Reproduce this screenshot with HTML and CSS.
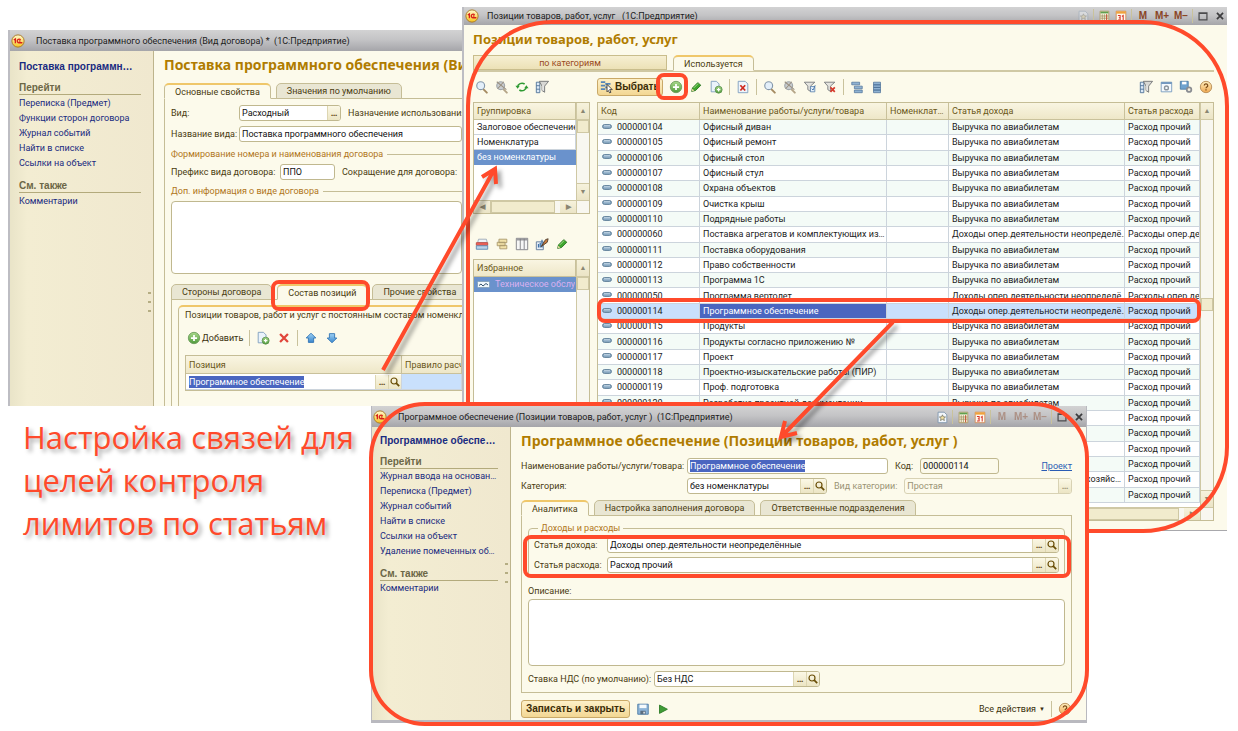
FILE: index.html
```html
<!DOCTYPE html>
<html lang="ru">
<head>
<meta charset="utf-8">
<title>Настройка связей для целей контроля лимитов по статьям</title>
<link rel="stylesheet" href="styles.css">
</head>
<body>
<svg class="sprite" aria-hidden="true">
  <defs>
    <linearGradient id="gy" x1="0" y1="0" x2="0" y2="1"><stop offset="0" stop-color="#fffbd0"/><stop offset="1" stop-color="#f7c31e"/></linearGradient>
    <linearGradient id="gg" x1="0" y1="0" x2="0" y2="1"><stop offset="0" stop-color="#a9d98c"/><stop offset="1" stop-color="#4f9a3a"/></linearGradient>
    <linearGradient id="gb" x1="0" y1="0" x2="0" y2="1"><stop offset="0" stop-color="#9fd2f5"/><stop offset="1" stop-color="#3a86cc"/></linearGradient>
    <linearGradient id="go" x1="0" y1="0" x2="0" y2="1"><stop offset="0" stop-color="#fff0c0"/><stop offset="1" stop-color="#f0a850"/></linearGradient>
  </defs>
  <symbol id="logo" viewBox="0 0 16 16"><circle cx="8" cy="8" r="7" fill="url(#gy)" stroke="#a8741c"/><path d="M3.2 6.8 5 5.6V10.600M11 6.700A2.100 2.100 0 1 0 9.300 10H13M10.800 8H9.300" fill="none" stroke="#d8201a" stroke-width="1.500"/></symbol>
  <symbol id="search" viewBox="0 0 16 16"><path d="m9.500 10.500 4 4" stroke="#a58b62" stroke-width="2.200" stroke-linecap="round"/><circle cx="6.500" cy="6.500" r="4.500" fill="#e3effa" stroke="#8497aa" stroke-width="1.300"/></symbol>
  <symbol id="searchoff" viewBox="0 0 16 16"><path d="m9.500 10.500 4 4" stroke="#b5a588" stroke-width="2.200" stroke-linecap="round"/><circle cx="6.500" cy="6.500" r="4.500" fill="#c9cdd0" stroke="#a0a6aa" stroke-width="1.300"/><path d="m2 2 11 9M10 2 3 10" stroke="#9a9080" stroke-width="1.200"/></symbol>
  <symbol id="lens" viewBox="0 0 12 12"><circle cx="5" cy="5" r="3" fill="none" stroke="#6a4f08" stroke-width="1.200"/><path d="m7.200 7.200 3 3" stroke="#6a4f08" stroke-width="1.800"/></symbol>
  <symbol id="refresh" viewBox="0 0 16 16"><path d="M3 8a5 4.500 0 0 1 8-3.400M13 8a5 4.500 0 0 1-8 3.400" fill="none" stroke="#2f9a33" stroke-width="1.800"/><path d="M0.500 6.500h5L3 10zM10.500 9.500h5L13 6z" fill="#2f9a33"/></symbol>
  <symbol id="filterlist" viewBox="0 0 16 16"><path d="M1.500 2.500h4v12h-4z" fill="#dbe9f7" stroke="#4b6f96"/><path d="M1.500 6.500h4M1.500 10.500h4" stroke="#4b6f96"/><path d="M5 1.500h10.500L11 7v7l-3-2V7z" fill="#d8d8d4" stroke="#6e7072"/><path d="M9 6v6" stroke="#fff"/></symbol>
  <symbol id="plus" viewBox="0 0 16 16"><circle cx="8" cy="8" r="6.500" fill="url(#gg)" stroke="#6d9c5c"/><path d="M8 4.500v7M4.500 8h7" stroke="#fff" stroke-width="2"/></symbol>
  <symbol id="pencil" viewBox="0 0 16 16"><path d="m3 13 1-4 6-6 3.500 3-6 6z" fill="#3fa62e" stroke="#23701b"/><path d="m3 13 .7-3 2.400 2z" fill="#e9d6a0"/><path d="m5.500 9 5-5" stroke="#a8e08f"/></symbol>
  <symbol id="docplus" viewBox="0 0 16 16"><path d="M2.500 1.500h6l3 3v9h-9z" fill="#eaf3fb" stroke="#7b9cbd"/><circle cx="11" cy="11" r="4" fill="url(#gg)" stroke="#5d9450"/><path d="M11 9v4M9 11h4" stroke="#fff" stroke-width="1.400"/></symbol>
  <symbol id="cross" viewBox="0 0 16 16"><path d="m3.500 3.500 9 9m0-9-9 9" stroke="#e0453a" stroke-width="2.600"/></symbol>
  <symbol id="docx" viewBox="0 0 16 16"><path d="M2.500 1.500h8l3 3v10h-11z" fill="#eff6fc" stroke="#7b9cbd"/><path d="m5 6 5.500 6m0-6L5 12" stroke="#cf2a20" stroke-width="2"/></symbol>
  <symbol id="funnelok" viewBox="0 0 16 16"><path d="M1.500 2.500h12L8.500 7v6l-3-2V7z" fill="#e4e4df" stroke="#73777a"/><path d="M8.500 7.500h5v6h-5z" fill="#eaf3fb" stroke="#5f86b0"/><path d="m10 10 1.500 1.500L14 6" fill="none" stroke="#3a6ea8"/></symbol>
  <symbol id="funnelx" viewBox="0 0 16 16"><path d="M1.500 2.500h12L8.500 7v6l-3-2V7z" fill="#e4e4df" stroke="#73777a"/><path d="m8.500 8.500 5 5m0-5-5 5" stroke="#d63a2c" stroke-width="2"/></symbol>
  <symbol id="tree" viewBox="0 0 16 16"><path d="M2 2.500h9v3H2zM5 7h9v3H5zM5 11.500h9v3H5z" fill="#8fb2d2" stroke="#4b6f96" stroke-width=".8"/></symbol>
  <symbol id="list" viewBox="0 0 16 16"><path d="M4 2.500h8v3H4zM4 5.500h8v3H4zM4 8.500h8v3H4zM4 11.500h8v3H4z" fill="#8fb2d2" stroke="#4b6f96" stroke-width=".8"/></symbol>
  <symbol id="wingear" viewBox="0 0 16 16"><path d="M2.500 2.500h12v11h-12z" fill="#f4f9fd" stroke="#7498bd"/><path d="M2.500 3.500h12" stroke="#6a92bb" stroke-width="2"/><circle cx="8.500" cy="9" r="2.200" fill="none" stroke="#8a949c" stroke-width="1.600"/></symbol>
  <symbol id="savegear" viewBox="0 0 16 16"><path d="M1.500 1.500h9v9h-9z" fill="#6fa3cf" stroke="#4c7aa5"/><path d="M3.500 2h5v3h-5z" fill="#fff"/><circle cx="11.500" cy="11" r="2.600" fill="#f4f0e0" stroke="#8a8d92" stroke-width="2"/></symbol>
  <symbol id="help" viewBox="0 0 16 16"><circle cx="8" cy="8" r="6.500" fill="url(#go)" stroke="#b58a52"/><path d="M6 6.300a2 2 0 1 1 2.700 1.900q-.7.400-.7 1.300M8 10.700v1.400" fill="none" stroke="#7a4a16" stroke-width="1.400"/></symbol>
  <symbol id="star" viewBox="0 0 16 16"><path d="M3.500 2.500h7l3 3v9h-10z" fill="#f2f6fa" stroke="#7d95ad"/><path d="m8.500 5.500 1 2.300 2.500.2-1.900 1.600.6 2.400-2.200-1.300L6.300 12l.6-2.400L5 8l2.500-.2z" fill="#f5e3a4" stroke="#6a6a5a" stroke-width=".8"/></symbol>
  <symbol id="calc" viewBox="0 0 16 16"><path d="M3.500 2.500h10v12h-10z" fill="#f7f1dc" stroke="#b29a62"/><path d="M4 3h9v2H4z" fill="#5fa04e"/><path d="M6 6v8M8.500 6v8M11 6v8M4 8h9M4 10.500h9" stroke="#9b8b58" stroke-width=".8"/><path d="M11 6v8" stroke="#c9482f"/></symbol>
  <symbol id="cal" viewBox="0 0 16 16"><path d="M2.500 2.500h11v12h-11z" fill="#fffaf0" stroke="#d08a55"/><path d="M2.500 4h11" stroke="#f0a23c" stroke-width="2.600"/><path d="M4.500 7.500h2.500v2.500H5.500H7v2.500H4.500M9 8.500l1.500-1v5.500" fill="none" stroke="#d8382a" stroke-width="1.200"/></symbol>
  <symbol id="max" viewBox="0 0 16 16"><path d="M3.500 4.500h9v8h-9zM3 5h10" fill="none" stroke="#4b4b4d" stroke-width="1.400"/></symbol>
  <symbol id="close" viewBox="0 0 16 16"><path d="m4.500 4.500 7 7m0-7-7 7" stroke="#3c3c3e" stroke-width="2"/></symbol>
  <symbol id="cards" viewBox="0 0 16 16"><path d="M4 2.500h9l1 4H3z" fill="#eef3f8" stroke="#9aa8b6"/><path d="M1.500 6.500h13v3h-13z" fill="#f0645a" stroke="#b94a44"/><path d="M1.500 10h13v4h-13z" fill="#b9d3ea" stroke="#5a86b0"/></symbol>
  <symbol id="folders" viewBox="0 0 16 16"><path d="M4.500 2.500h9v4h-9zM2.500 6h9v4h-9zM5.500 9.500h8v4h-8z" fill="#f1e1a8" stroke="#a8976a"/></symbol>
  <symbol id="cols" viewBox="0 0 16 16"><path d="M1.500 1.500h13v13h-13z" fill="#f6f6f6" stroke="#7c7c80"/><path d="M1.500 3h13" stroke="#9a9a9e" stroke-width="2"/><path d="M6 2v12M10.500 2v12" stroke="#7c7c80"/></symbol>
  <symbol id="report" viewBox="0 0 16 16"><path d="M1.500 5.500h8v9h-8z" fill="#e6eef7" stroke="#5b7796"/><path d="M4 12V8M6 12V6.500M8 12V3" stroke="#3c70a8" stroke-width="1.400"/><path d="m7 11 5-8 3-1-1 4z" fill="#c97a3d" stroke="#4b3a2a"/></symbol>
  <symbol id="up" viewBox="0 0 16 16"><path d="m8 2.500 5.500 5.500H11v5H5V8H2.500z" fill="url(#gb)" stroke="#2f72b4"/></symbol>
  <symbol id="down" viewBox="0 0 16 16"><path d="M8 13.500 13.500 8H11V3H5v5H2.500z" fill="url(#gb)" stroke="#2f72b4"/></symbol>
  <symbol id="save" viewBox="0 0 16 16"><path d="M2 2.500h12v11.500H2z" fill="#8db4d8" stroke="#4c7aa5"/><path d="M4 3h8v4H4z" fill="#f5fafd"/><path d="M5 10h6v4H5z" fill="#5b6e80"/><path d="M8.500 11h1.500v2H8.500z" fill="#fff"/></symbol>
  <symbol id="play" viewBox="0 0 16 16"><path d="M4 3.500v9.500l9-4.700z" fill="#3f9c36" stroke="#2b7a26"/></symbol>
  <symbol id="pick" viewBox="0 0 16 16"><path d="M1 2.500h5M1 6.500h5M1 10.500h5M6 4.500h6M6 8.500h3" stroke="#5586b8" stroke-width="2"/><path d="m8 5 6 6h-3l1.500 3-1.500.7L9.500 12 8 13.500z" fill="#fff" stroke="#333"/></symbol>
  <symbol id="dash" viewBox="0 0 10 6"><rect x=".5" y=".5" width="9" height="4" rx="2" fill="#86a6c0" stroke="#557792" stroke-width=".8"/><path d="M2 1.800h6" stroke="#c9dce9"/></symbol>
  <symbol id="wave" viewBox="0 0 14 8"><rect x=".5" y=".5" width="12" height="6" rx="1" fill="#f2f7fb" stroke="#88a4bd"/><path d="m2 4.500 2-1.500 2 2 3-2.500L11 4" fill="none" stroke="#35536e"/></symbol>
</svg>

<main class="canvas">

  <section class="window w-contract">
    <header class="titlebar"><svg class="ic"><use href="#logo"/></svg><span>Поставка программного обеспечения (Вид договора) *&nbsp; (1С:Предприятие)</span></header>
    <div class="body">
      <nav class="side">
        <strong>Поставка программн…</strong>
        <h3>Перейти</h3>
        <a href="#">Переписка (Предмет)</a><a href="#">Функции сторон договора</a><a href="#">Журнал событий</a><a href="#">Найти в списке</a><a href="#">Ссылки на объект</a>
        <h3>См. также</h3>
        <a href="#">Комментарии</a>
        <i class="grip"></i>
      </nav>
      <div class="work">
        <h1>Поставка программного обеспечения (Вид договора)</h1>
        <div class="tabs"><button class="tab on">Основные свойства</button><button class="tab">Значения по умолчанию</button></div>
        <div class="panel">
          <div class="row"><label class="l68" for="kind">Вид:</label><span class="field f102"><input id="kind" value="Расходный"><button>…</button></span><label>Назначение использования:</label></div>
          <div class="row"><label class="l68" for="kname">Название вида:</label><span class="field grow"><input id="kname" value="Поставка программного обеспечения"></span></div>
          <div class="legend"><span>Формирование номера и наименования договора</span></div>
          <div class="row tight"><label class="l109" for="prefix">Префикс вида договора:</label><span class="field f55"><input id="prefix" value="ППО"></span><label>Сокращение для договора:</label></div>
          <div class="legend"><span>Доп. информация о виде договора</span></div>
          <textarea class="info" aria-label="Доп. информация"></textarea>
          <div class="tabs second"><button class="tab">Стороны договора</button><button class="tab on">Состав позиций</button><button class="tab">Прочие свойства</button></div>
          <div class="panel inner">
            <div class="nested">
              <p>Позиции товаров, работ и услуг с постоянным составом номенклатуры</p>
              <div class="tools"><button class="txt"><svg class="ic"><use href="#plus"/></svg>Добавить</button><i class="sep"></i><button><svg class="ic"><use href="#docplus"/></svg></button><button><svg class="ic"><use href="#cross"/></svg></button><i class="sep"></i><button><svg class="ic"><use href="#up"/></svg></button><button><svg class="ic"><use href="#down"/></svg></button></div>
              <table class="grid pos">
                <colgroup><col class="c216"><col></colgroup>
                <thead><tr><th>Позиция</th><th>Правило расчета</th></tr></thead>
                <tbody><tr><td><span class="cellfield"><input class="sel" aria-label="Позиция" value="Программное обеспечение"><button>…</button><button><svg class="lens"><use href="#lens"/></svg></button></span></td><td class="cur"></td></tr></tbody>
              </table>
            </div>
          </div>
        </div>
      </div>
    </div>
  </section>

  <section class="window w-items">
    <header class="titlebar"><svg class="ic"><use href="#logo"/></svg><span>Позиции товаров, работ, услуг &nbsp; (1С:Предприятие)</span>
      <div class="sys"><button class="dim"><svg class="ic"><use href="#star"/></svg></button><i class="sep"></i><button><svg class="ic"><use href="#calc"/></svg></button><button><svg class="ic"><use href="#cal"/></svg></button><i class="sep"></i><button class="m">M</button><button class="m">M+</button><button class="m">M−</button><i class="sep"></i><button><svg class="ic"><use href="#max"/></svg></button><button><svg class="ic"><use href="#close"/></svg></button></div>
    </header>
    <div class="items">
      <h1>Позиции товаров, работ, услуг</h1>
      <div class="switch"><button class="cat">по категориям</button><div class="tabs"><button class="tab on">Используется</button></div></div>
      <div class="split">
        <div class="left">
          <div class="tools"><button><svg class="ic"><use href="#search"/></svg></button><button><svg class="ic"><use href="#searchoff"/></svg></button><button><svg class="ic"><use href="#refresh"/></svg></button><button><svg class="ic"><use href="#filterlist"/></svg></button></div>
          <div class="listbox groups">
            <div class="view">
              <table class="grid"><thead><tr><th>Группировка</th></tr></thead><tbody><tr><td>Залоговое обеспечение</td></tr><tr><td>Номенклатура</td></tr><tr class="pick"><td>без номенклатуры</td></tr></tbody></table>
              <div class="vbar"><b>▲</b><i class="thumb"></i><b class="end">▼</b></div>
            </div>
            <div class="hbar"><b>◀</b><i class="thumb"></i><b>▶</b><span></span></div>
          </div>
          <div class="tools lower"><button><svg class="ic"><use href="#cards"/></svg></button><button><svg class="ic"><use href="#folders"/></svg></button><button><svg class="ic"><use href="#cols"/></svg></button><button><svg class="ic"><use href="#report"/></svg></button><button><svg class="ic"><use href="#pencil"/></svg></button></div>
          <div class="listbox favs">
            <div class="view">
              <table class="grid"><thead><tr><th>Избранное</th></tr></thead><tbody><tr class="pick fav"><td><svg class="wave"><use href="#wave"/></svg>Техническое обслуживание</td></tr></tbody></table>
              <div class="vbar"><b>▲</b><i class="thumb"></i></div>
            </div>
          </div>
        </div>
        <div class="right">
          <div class="tools"><button class="gold"><svg class="ic"><use href="#pick"/></svg>Выбрать</button><button><svg class="ic"><use href="#plus"/></svg></button><button><svg class="ic"><use href="#pencil"/></svg></button><button><svg class="ic"><use href="#docplus"/></svg></button><i class="sep"></i><button><svg class="ic"><use href="#docx"/></svg></button><i class="sep"></i><button><svg class="ic"><use href="#search"/></svg></button><button><svg class="ic"><use href="#searchoff"/></svg></button><button><svg class="ic"><use href="#funnelok"/></svg></button><button><svg class="ic"><use href="#funnelx"/></svg></button><i class="sep"></i><button><svg class="ic"><use href="#tree"/></svg></button><button><svg class="ic"><use href="#list"/></svg></button>
            <span class="push"></span><button><svg class="ic"><use href="#filterlist"/></svg></button><button><svg class="ic"><use href="#wingear"/></svg></button><button><svg class="ic"><use href="#savegear"/></svg></button><button><svg class="ic"><use href="#help"/></svg></button></div>
          <div class="listbox main">
            <div class="view">
              <div class="rows">
              <table class="grid zebra">
                <colgroup><col class="c102"><col class="c187"><col class="c62"><col><col class="c75"></colgroup>
                <thead><tr><th>Код</th><th>Наименование работы/услуги/товара</th><th>Номенклат…</th><th>Статья дохода</th><th>Статья расхода</th></tr></thead>
                <tbody>
                <tr><td><svg class="dash"><use href="#dash"/></svg>000000104</td><td>Офисный диван</td><td></td><td>Выручка по авиабилетам</td><td>Расход прочий</td></tr>
                <tr><td><svg class="dash"><use href="#dash"/></svg>000000105</td><td>Офисный ремонт</td><td></td><td>Выручка по авиабилетам</td><td>Расход прочий</td></tr>
                <tr><td><svg class="dash"><use href="#dash"/></svg>000000106</td><td>Офисный стол</td><td></td><td>Выручка по авиабилетам</td><td>Расход прочий</td></tr>
                <tr><td><svg class="dash"><use href="#dash"/></svg>000000107</td><td>Офисный стул</td><td></td><td>Выручка по авиабилетам</td><td>Расход прочий</td></tr>
                <tr><td><svg class="dash"><use href="#dash"/></svg>000000108</td><td>Охрана объектов</td><td></td><td>Выручка по авиабилетам</td><td>Расход прочий</td></tr>
                <tr><td><svg class="dash"><use href="#dash"/></svg>000000109</td><td>Очистка крыш</td><td></td><td>Выручка по авиабилетам</td><td>Расход прочий</td></tr>
                <tr><td><svg class="dash"><use href="#dash"/></svg>000000110</td><td>Подрядные работы</td><td></td><td>Выручка по авиабилетам</td><td>Расход прочий</td></tr>
                <tr><td><svg class="dash"><use href="#dash"/></svg>000000060</td><td>Поставка агрегатов и комплектующих из…</td><td></td><td>Доходы опер.деятельности неопределё…</td><td>Расходы опер.деятельности</td></tr>
                <tr><td><svg class="dash"><use href="#dash"/></svg>000000111</td><td>Поставка оборудования</td><td></td><td>Выручка по авиабилетам</td><td>Расход прочий</td></tr>
                <tr><td><svg class="dash"><use href="#dash"/></svg>000000112</td><td>Право собственности</td><td></td><td>Выручка по авиабилетам</td><td>Расход прочий</td></tr>
                <tr><td><svg class="dash"><use href="#dash"/></svg>000000113</td><td>Программа 1С</td><td></td><td>Выручка по авиабилетам</td><td>Расход прочий</td></tr>
                <tr><td><svg class="dash"><use href="#dash"/></svg>000000050</td><td>Программа вертолет</td><td></td><td>Доходы опер.деятельности неопределё…</td><td>Расходы опер.деятельности</td></tr>
                <tr class="cur"><td><svg class="dash"><use href="#dash"/></svg>000000114</td><td class="focus">Программное обеспечение</td><td></td><td>Доходы опер.деятельности неопределё…</td><td>Расход прочий</td></tr>
                <tr><td><svg class="dash"><use href="#dash"/></svg>000000115</td><td>Продукты</td><td></td><td>Выручка по авиабилетам</td><td>Расход прочий</td></tr>
                <tr><td><svg class="dash"><use href="#dash"/></svg>000000116</td><td>Продукты согласно приложению №</td><td></td><td>Выручка по авиабилетам</td><td>Расход прочий</td></tr>
                <tr><td><svg class="dash"><use href="#dash"/></svg>000000117</td><td>Проект</td><td></td><td>Выручка по авиабилетам</td><td>Расход прочий</td></tr>
                <tr><td><svg class="dash"><use href="#dash"/></svg>000000118</td><td>Проектно-изыскательские работы (ПИР)</td><td></td><td>Выручка по авиабилетам</td><td>Расход прочий</td></tr>
                <tr><td><svg class="dash"><use href="#dash"/></svg>000000119</td><td>Проф. подготовка</td><td></td><td>Выручка по авиабилетам</td><td>Расход прочий</td></tr>
                <tr><td><svg class="dash"><use href="#dash"/></svg>000000120</td><td>Разработка проектной документации</td><td></td><td>Выручка по авиабилетам</td><td>Расход прочий</td></tr>
                <tr><td></td><td></td><td></td><td></td><td>Расход прочий</td></tr>
                <tr><td></td><td></td><td></td><td></td><td>Расход прочий</td></tr>
                <tr><td></td><td></td><td></td><td></td><td>Расход прочий</td></tr>
                <tr><td></td><td></td><td></td><td></td><td>Расход прочий</td></tr>
                <tr><td></td><td></td><td></td><td class="tail">хозяйс…</td><td>Расход прочий</td></tr>
                <tr><td></td><td></td><td></td><td></td><td>Расход прочий</td></tr>
                </tbody>
              </table>
              </div>
              <div class="vbar"><b>▲</b><i class="thumb"></i><b class="end">▼</b></div>
            </div>
            <div class="hbar"><b>◀</b><i class="thumb"></i><b>▶</b><span></span></div>
          </div>
        </div>
      </div>
    </div>
  </section>

  <div class="mark m-items"></div>

  <section class="window w-card">
    <header class="titlebar"><svg class="ic"><use href="#logo"/></svg><span>Программное обеспечение (Позиции товаров, работ, услуг )&nbsp; (1С:Предприятие)</span>
      <div class="sys"><button><svg class="ic"><use href="#star"/></svg></button><i class="sep"></i><button><svg class="ic"><use href="#calc"/></svg></button><button><svg class="ic"><use href="#cal"/></svg></button><i class="sep"></i><button class="m dim">M</button><button class="m dim">M+</button><button class="m dim">M−</button><i class="sep"></i><button><svg class="ic"><use href="#max"/></svg></button><button><svg class="ic"><use href="#close"/></svg></button></div>
    </header>
    <div class="body">
      <nav class="side">
        <strong>Программное обеспе…</strong>
        <h3>Перейти</h3>
        <a href="#">Журнал ввода на основан…</a><a href="#">Переписка (Предмет)</a><a href="#">Журнал событий</a><a href="#">Найти в списке</a><a href="#">Ссылки на объект</a><a href="#">Удаление помеченных об…</a>
        <h3>См. также</h3>
        <a href="#">Комментарии</a>
        <i class="grip"></i>
      </nav>
      <div class="work">
        <h1>Программное обеспечение (Позиции товаров, работ, услуг )</h1>
        <div class="row"><label class="l166" for="iname">Наименование работы/услуги/товара:</label><span class="field f200"><input id="iname" class="sel" value="Программное обеспечение"></span><label for="code">Код:</label><span class="field ro f79"><input id="code" value="000000114"></span><a class="link" href="#">Проект</a></div>
        <div class="row"><label class="l166" for="cat">Категория:</label><span class="field f140"><input id="cat" value="без номенклатуры"><button>…</button><button><svg class="lens"><use href="#lens"/></svg></button></span><label class="off" for="ctype">Вид категории:</label><span class="field ro off grow"><input id="ctype" value="Простая" disabled><button disabled>…</button></span></div>
        <div class="tabs"><button class="tab on">Аналитика</button><button class="tab">Настройка заполнения договора</button><button class="tab">Ответственные подразделения</button></div>
        <div class="panel">
          <fieldset><legend>Доходы и расходы</legend>
            <div class="row"><label class="l73" for="inc">Статья дохода:</label><span class="field grow"><input id="inc" value="Доходы опер.деятельности неопределённые"><button>…</button><button><svg class="lens"><use href="#lens"/></svg></button></span></div>
            <div class="row"><label class="l73" for="exp">Статья расхода:</label><span class="field grow"><input id="exp" value="Расход прочий"><button>…</button><button><svg class="lens"><use href="#lens"/></svg></button></span></div>
          </fieldset>
          <label class="desc" for="desc">Описание:</label>
          <textarea id="desc"></textarea>
          <div class="row"><label class="l126" for="vat">Ставка НДС (по умолчанию):</label><span class="field f166"><input id="vat" value="Без НДС"><button>…</button><button><svg class="lens"><use href="#lens"/></svg></button></span></div>
        </div>
        <div class="tools foot"><button class="gold">Записать и закрыть</button><button><svg class="ic"><use href="#save"/></svg></button><button><svg class="ic"><use href="#play"/></svg></button><span class="push"></span><button class="txt">Все действия <small>▼</small></button><i class="sep"></i><button><svg class="ic"><use href="#help"/></svg></button></div>
      </div>
    </div>
  </section>

  <p class="caption">Настройка связей для целей контроля лимитов по статьям</p>

  <div class="mark m-card"></div>
  <div class="mark small m-tab"></div>
  <div class="mark small m-plus"></div>
  <div class="mark small m-row"></div>
  <div class="mark small m-fields"></div>
  <svg class="arrows" viewBox="0 0 1238 731" aria-hidden="true">
    <g fill="none" stroke="#ff4a2b" stroke-width="4"><path d="M383 370 494 170M482 177l13-8 1 15"/><path d="M893 322 782 436M785 421l-4 16 16-4"/></g>
  </svg>
</main>
</body>
</html>
```
FILE: styles.css
```css
* { box-sizing: border-box; }
body { margin: 0; background: #fff; font: 9px/12px Roboto, "Liberation Sans", Arial, sans-serif; color: #333; }
button, input, textarea { font: inherit; color: inherit; margin: 0; }
button { border: 0; padding: 0; background: none; white-space: nowrap; }
h1, h3, p { margin: 0; }
a { text-decoration: none; }
label { flex: none; }
.sprite { position: absolute; width: 0; height: 0; }
.ic { width: 14px; height: 14px; display: block; flex: none; }
.lens { width: 12px; height: 12px; display: block; }
.canvas { position: relative; min-height: 731px; overflow: hidden; }

/* windows */
.window { position: absolute; display: flex; flex-direction: column; overflow: hidden; background: #fcfaeb; white-space: nowrap; }
.w-contract { left: 8px; top: 30px; width: 455px; height: 376px; border-left: 2px solid #bdbdc3; border-right: 1px solid #b4b4ba; }
.w-items { left: 462px; top: 7px; width: 765px; height: 524px; border-left: 2px solid #bdbdc3; border-bottom: 1px solid #a8a8ac; }
.w-card { left: 371px; top: 406px; width: 716px; height: 317px; border: solid #b9b9bf; border-width: 0 1px 3px; }
.titlebar { flex: none; height: 21px; display: flex; align-items: center; gap: 11px; padding-left: 1px; background: linear-gradient(#d2d2d3, #c4c4c6 45%, #a5a5a9); color: #1c1c1c; }
.w-items .titlebar { height: 18px; gap: 8px; }
.titlebar .sys { margin-left: auto; display: flex; align-items: center; gap: 3px; font: bold 10px/12px "Liberation Sans", Arial, sans-serif; color: #8a4424; }
.sys .sep { height: 14px; }
.sys .m { width: 16px; display: flex; justify-content: center; }
.dim { opacity: .4; }
.sep { width: 1px; height: 16px; background: #c9c29c; flex: none; }
.body { flex: 1; display: flex; min-height: 0; }
.side { position: relative; flex: none; width: 144px; padding: 8px 12px 0 9px; background: linear-gradient(90deg, #e9e4c8, #f3edd2 12%, #f0e8cf); border-right: 1px solid #bdb48c; color: #182a80; }
.w-card .side { width: 139px; padding-top: 6px; padding-left: 8px; }
.side strong, .side a { display: block; height: 15px; line-height: 15px; color: #182a80; }
.side strong, .side h3 { font-family: "Liberation Sans", Arial, sans-serif; font-size: 10px; font-weight: bold; }
.side strong { height: 16px; line-height: 16px; }
.side h3 { height: 14px; margin: 8px 0 1px; border-bottom: 1px solid #b3aa7c; line-height: 13px; color: #6c6746; }
.side strong + h3 { margin-top: 6px; }
.w-card .side h3 { margin-bottom: 0; }
.grip { position: absolute; right: 2px; top: 241px; width: 3px; height: 22px; background: repeating-linear-gradient(#b5ad83 0 2px, transparent 2px 9px); }
.w-card .grip { top: 136px; }
.work { flex: 1; min-width: 0; padding: 0 0 0 10px; }
.w-card .work { padding-right: 14px; }
h1 { height: 28px; line-height: 28px; font-family: "Noto Sans", sans-serif; font-size: 14px; font-weight: bold; color: #b07c00; }

/* tabs */
.tabs { display: flex; gap: 5px; height: 16px; position: relative; margin-bottom: -1px; }
.w-contract .work > .tabs { margin-top: 4px; }
.tab { padding: 0 10px; border: 1px solid #c5bd96; border-radius: 5px 5px 0 0; background: #e9e6d3; color: #4a3c10; }
.tab.on { background: #fcfaeb; border-top: 2px solid #efc76a; border-bottom-color: #fcfaeb; }
.panel { border: 1px solid #c5bd96; padding: 6px; }
.w-contract .panel { border-right: 0; padding-right: 0; }

/* form rows */
.row { display: flex; align-items: center; gap: 7px; height: 16px; margin-bottom: 5px; color: #4a3c10; }
.row.tight { margin-bottom: 4px; }
.field { display: flex; height: 16px; background: #fff; border: 1px solid #c0b88f; border-radius: 3px; overflow: hidden; padding-left: 2px; flex: none; align-items: center; }
.field.grow { flex: 1; }
.field input, .cellfield input { flex: 1; min-width: 0; border: 0; padding: 0; background: none; height: 12px; color: #111; outline: 0; }
.field button, .cellfield button { width: 13px; height: 14px; background: linear-gradient(#fbf8e6, #ece5c4); border-left: 1px solid #ddd6b2; color: #5a4306; font-weight: bold; display: flex; justify-content: center; align-items: center; flex: none; }
input.sel { flex: none !important; field-sizing: content; background: #4a66c0 !important; color: #fff !important; }
.field.ro { background: #fcfaeb; }
.field.off, .field.off input, .field.off button, label.off { color: #9a9374; border-color: #d8d2b4; }
.l68 { width: 68px; margin-right: -7px; }
.l109 { width: 109px; margin-right: -7px; }
.l166 { width: 166px; margin-right: -7px; }
.l73 { width: 73px; margin-right: -7px; }
.l126 { width: 126px; margin-right: -7px; }
.f102 { width: 102px; } .f55 { width: 55px; } .f200 { width: 201px; } .f79 { width: 79px; } .f140 { width: 140px; } .f166 { width: 166px; }
.legend { display: flex; align-items: center; gap: 4px; height: 14px; margin-bottom: 3px; color: #b0761a; }
.legend::after { content: ""; flex: 1; height: 1px; background: #c5bd96; }
textarea { display: block; width: 100%; border: 1px solid #c0b88f; border-radius: 4px; background: #fff; resize: none; outline: 0; }
.info { height: 73px; margin-bottom: 10px; }
.panel.inner { padding: 5px 0 0 6px; }
.nested { border: 1px solid #c5bd96; border-right: 0; border-bottom: 0; border-top: 2px solid #efc76a; border-radius: 5px 0 0 0; padding: 2px 0 0 6px; color: #4a3c10; height: 140px; }

/* toolbars */
.tools { display: flex; align-items: center; gap: 6px; color: #3a300c; }
.tools button { display: flex; align-items: center; gap: 1px; height: 18px; }
.nested .tools { height: 34px; padding-left: 2px; }
.nested .tools button + button { margin-left: 1px; }
.tools .gold { border: 1px solid #c9a968; border-radius: 3px; background: linear-gradient(#fdf0c8, #f3d793); padding: 0 4px; font: bold 10px/12px "Liberation Sans", Arial, sans-serif; color: #3a2c08; }
.tools small { font-size: 6px; margin-left: 2px; }
.push { flex: 1; }

/* grids */
.grid { border-collapse: separate; border-spacing: 0; table-layout: fixed; width: 100%; background: #fff; }
.grid th, .grid td { text-align: left; font-weight: normal; padding: 0 3px; overflow: hidden; border-right: 1px solid #ccd4dc; border-bottom: 1px solid #ccd4dc; line-height: 14px; height: 15px; color: #1c1c1c; }
.grid th { height: 17px; background: linear-gradient(#f9f5e2, #eee7c8); color: #6a5718; border-color: #c9c19b; }
.c216 { width: 216px; } .c102 { width: 102px; } .c187 { width: 187px; } .c62 { width: 62px; } .c75 { width: 75px; }
.pos { border: 1px solid #c5bd96; border-right: 0; }
.pos th { height: 18px; }
.pos td { padding: 0; height: 16px; }
.pos tbody { height: 16px; }
.cellfield { display: flex; align-items: center; padding-left: 3px; }
.cellfield input + button { margin-left: auto; }
.cur td, td.cur { background: #c9e0fc; }
.dash { width: 10px; height: 6px; margin: 0 5px 2px 1px; vertical-align: middle; }
.wave { width: 14px; height: 8px; margin-right: 4px; vertical-align: middle; }
.grid .tail { text-align: right; }
.grid .focus { background: #4a66c0; color: #fff; }
.pick td { background: #6a92cc; border-color: #6a92cc; }
.grid .pick td { color: #fff; }
.grid .fav td { color: #d9b0f0; }

/* items list window */
.items { flex: 1; display: flex; flex-direction: column; min-height: 0; padding: 0 13px 9px 9px; }
.items h1 { height: 30px; font-size: 13px; }
.switch { display: flex; gap: 6px; border-bottom: 2px solid #cfc8a4; height: 17px; flex: none; }
.cat { width: 194px; border: 1px solid #c9bd8c; background: linear-gradient(#f6efd2, #ece1b6); color: #9a4a1c; }
.split { flex: 1; display: flex; gap: 7px; min-height: 0; }
.left { width: 117px; flex: none; display: flex; flex-direction: column; }
.right { flex: 1; min-width: 0; display: flex; flex-direction: column; }
.split .tools { height: 30px; flex: none; padding-left: 2px; }
.right .tools { padding: 0 1px 0 0; }
.right .tools .gold { padding: 0 2px; }
.tools.lower { margin: 15px 0 0; }
.listbox { display: flex; flex-direction: column; border: 1px solid #c5bd96; background: #fff; overflow: hidden; }
.groups { height: 112px; flex: none; }
.favs, .main { flex: 1; min-height: 0; }
.view { flex: 1; display: flex; min-height: 0; }
.view > .grid { flex: 1; align-self: flex-start; width: auto; }
.groups .grid, .favs .grid { width: 102px; }
.rows { flex: 1; min-width: 0; background: #fff; }
.rows .grid { height: calc(100% - 4px); }
.zebra tbody tr:nth-child(odd) td { background: #f4fbf7; }
.zebra tbody tr.cur td { background: #c9e0fc; }
.zebra tbody tr.cur td.focus { background: #4a66c0; }
.vbar, .hbar { display: flex; background: #f8f7f0; flex: none; }
.vbar { width: 13px; flex-direction: column; border-left: 1px solid #cfc8a4; }
.hbar { height: 13px; border-top: 1px solid #cfc8a4; }
.vbar b, .hbar b { font-size: 7px; color: #8a8672; background: linear-gradient(#f6f2dc, #ebe4c6); display: flex; align-items: center; justify-content: center; }
.vbar b { height: 17px; border-bottom: 1px solid #cfc8a4; }
.vbar b.end { margin-top: auto; border-top: 1px solid #cfc8a4; border-bottom: 0; }
.hbar b { width: 17px; border-right: 1px solid #cfc8a4; }
.thumb { background: #f1ebcd; border: 1px solid #cfc8a4; }
.vbar .thumb { height: 13px; }
.main .vbar .thumb { margin-top: 178px; }
.hbar .thumb { flex: 1; margin-right: 5px; }
.hbar span { width: 12px; }

/* item card window */
.w-card .row { margin-bottom: 4px; }
.w-card .work > h1 + .row { margin: 3px 0 4px; }
.w-card .tabs { margin-top: 6px; }
.f79 + .link { margin-left: auto; color: #2a5cb4; text-decoration: underline; }
fieldset { margin: 0 0 6px; padding: 3px 5px 0 5px; border: 1px solid #c5bd96; border-radius: 4px; color: #b0761a; }
legend { padding: 0 3px; margin-left: 4px; line-height: 12px; }
.desc { display: block; height: 15px; line-height: 14px; color: #4a3c10; }
#desc { height: 67px; margin-bottom: 5px; }
.w-card .panel { padding: 6px 6px 1px; }
.tools.foot { padding-top: 7px; }

/* callouts over the windows */
.caption { position: absolute; left: 23px; top: 416px; width: 350px; font: 31px/43px "Open Sans", "Noto Sans", sans-serif; color: #ff4a2b; text-shadow: 3px 3px 4px rgba(0, 0, 0, .35); }
.mark { position: absolute; border: 4px solid #ff4a2b; pointer-events: none; }
.small { border-radius: 8px; }
.m-items { left: 466px; top: 20px; width: 763px; height: 513px; border-radius: 86px; }
.m-card { left: 369px; top: 402px; width: 720px; height: 324px; border-radius: 56px; }
.m-tab { left: 271px; top: 280px; width: 99px; height: 31px; }
.m-plus { left: 656px; top: 73px; width: 32px; height: 27px; }
.m-row { left: 597px; top: 298px; width: 604px; height: 25px; }
.m-fields { left: 523px; top: 535px; width: 548px; height: 43px; }
.arrows { position: absolute; left: 0; top: 0; width: 1238px; height: 731px; pointer-events: none; filter: drop-shadow(4px 4px 2px rgba(0, 0, 0, .35)); }
```
